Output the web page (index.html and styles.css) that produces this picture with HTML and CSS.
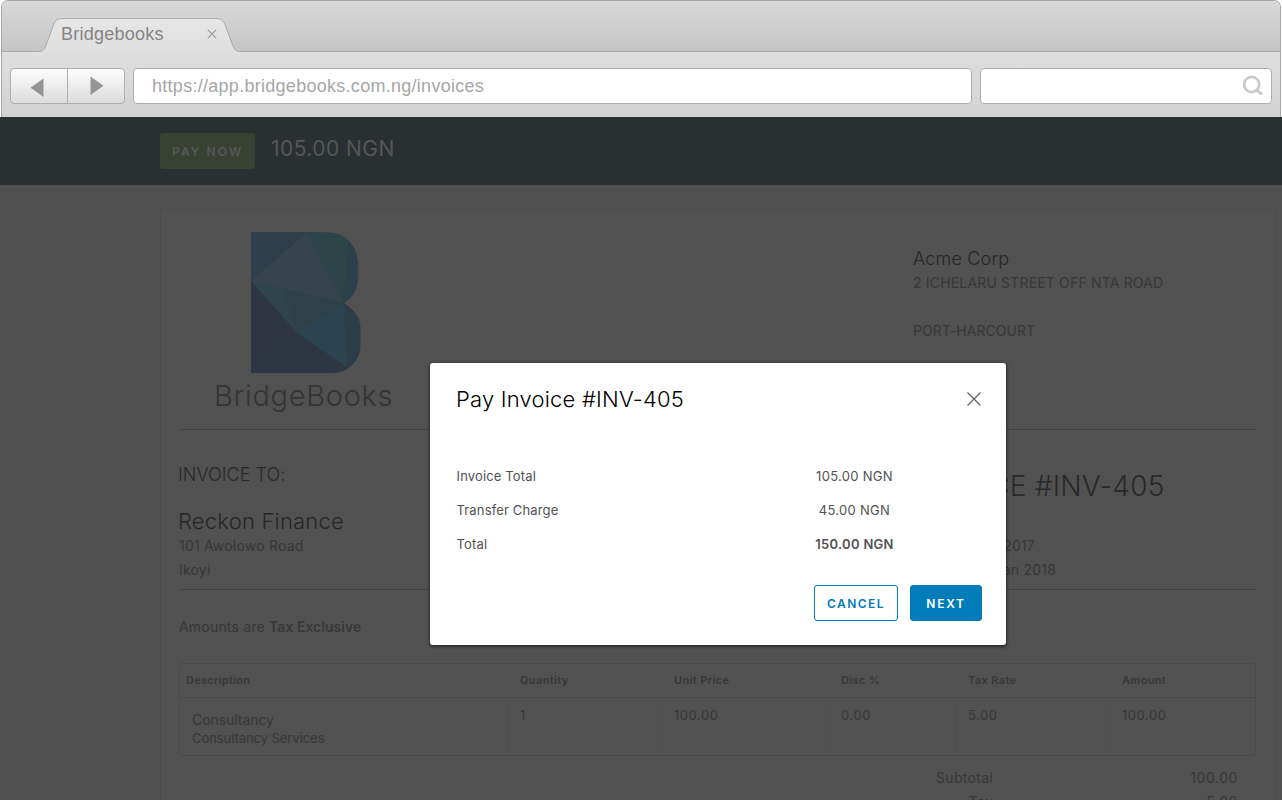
FILE: index.html
```html
<!DOCTYPE html>
<html lang="en">
<head>
<meta charset="utf-8">
<title>Bridgebooks</title>
<link rel="stylesheet" href="styles.css">
</head>
<body>
<div class="window">
  <header class="chrome">
    <div class="tabstrip">
      <svg class="tab-shape" width="204" height="36" viewBox="0 0 204 36">
        <defs><linearGradient id="tabfill" x1="0" y1="0" x2="0" y2="1"><stop offset="0" stop-color="#e6e6e6"/><stop offset="1" stop-color="#dfdfdf"/></linearGradient></defs>
        <path d="M0 36V34.500C5 34.500 6.500 32.500 8 28.500L15.500 8C17.500 3 19.500 1.500 24.500 1.500H178C183 1.500 185.500 3.500 187 7.500L194.500 28C196.500 33 198 34.500 203 34.500V36Z" fill="url(#tabfill)"/>
        <path d="M-1 34.500H0C5 34.500 6.500 32.500 8 28.500L15.500 8C17.500 3 19.500 1.500 24.500 1.500H178C183 1.500 185.500 3.500 187 7.500L194.500 28C196.500 33 198 34.500 203 34.500H205" fill="none" stroke="#ababab"/>
      </svg>
      <div class="tab">
        <span class="tab-title">Bridgebooks</span>
        <svg width="10" height="10" viewBox="0 0 10 10"><path d="M.8.8l8.400 8.400M9.200.8L.8 9.200" stroke="#9a9a9a" stroke-width="1.200"/></svg>
      </div>
    </div>
    <div class="toolbar">
      <div class="nav">
        <span class="nav-btn"><svg width="14" height="20" viewBox="0 0 14 20"><path d="M13.500 .5v18.500L.5 9.800z" fill="#959595"/></svg></span>
        <span class="nav-btn nav-next"><svg width="14" height="20" viewBox="0 0 14 20"><path d="M.5 .5v18.500l13-9.300z" fill="#959595"/></svg></span>
      </div>
      <div class="field url">https://app.bridgebooks.com.ng/invoices</div>
      <div class="field search"><svg width="22" height="22" viewBox="0 0 22 22"><circle cx="9.700" cy="9.500" r="7.600" fill="none" stroke="#cbcbcb" stroke-width="2.800"/><path d="M14.500 15l4.500 3.500" stroke="#cbcbcb" stroke-width="3" stroke-linecap="round"/></svg></div>
    </div>
  </header>

  <div class="paybar">
    <span class="pay-now">PAY NOW</span>
    <span class="pay-amount">105.00 NGN</span>
  </div>

  <main class="page">
    <article class="invoice">
      <section class="letterhead">
        <div class="brand">
          <svg class="brand-mark" width="110" height="141" viewBox="275 96 327 422" preserveAspectRatio="none">
            <defs><clipPath id="b"><path d="M275 96H440L505 98C555 98 592 138 592 190V235C592 270 575 292 552 309C582 329 601 352 601 385V430C601 482 565 518 515 518H275Z"/></clipPath></defs>
            <g clip-path="url(#b)">
              <path d="M275 96h330v422H275z" fill="#2b3d49"/>
              <path d="M275 96H440L275 244z" fill="#2c3f4a"/>
              <path d="M440 96L550 307 275 244z" fill="#36444d"/>
              <path d="M440 96H568L550 307z" fill="#2d4547"/>
              <path d="M568 96H605V330L550 307z" fill="#2c404a"/>
              <path d="M275 244L375 267 410 397z" fill="#30454b"/>
              <path d="M375 267L550 307 410 397z" fill="#2e4149"/>
              <path d="M550 307L559 500 410 397z" fill="#2c4451"/>
              <path d="M275 244L410 397 275 518z" fill="#303542"/>
              <path d="M410 397L585 518H275z" fill="#2c3743"/>
            </g>
          </svg>
          <span class="brand-name">BridgeBooks</span>
        </div>
        <div class="address">
          <span class="company">Acme Corp</span>
          <span class="street">2 ICHELARU STREET OFF NTA ROAD</span>
          <span class="city">PORT-HARCOURT</span>
        </div>
      </section>

      <section class="parties">
        <div class="billed">
          <span class="to-label">INVOICE TO:</span>
          <span class="client">Reckon Finance</span>
          <span>101 Awolowo Road</span>
          <span>Ikoyi</span>
        </div>
        <div class="meta">
          <span class="number">INVOICE #INV-405</span>
          <span class="issued">Dec 2017</span>
          <span class="due">Jan 2018</span>
        </div>
      </section>

      <p class="tax-note">Amounts are <b>Tax Exclusive</b></p>

      <div class="items">
        <div class="row head">
          <span>Description</span><span>Quantity</span><span>Unit Price</span><span>Disc %</span><span>Tax Rate</span><span>Amount</span>
        </div>
        <div class="row body">
          <div class="desc"><span class="desc-name">Consultancy</span><span class="desc-text">Consultancy Services</span></div>
          <span>1</span><span>100.00</span><span>0.00</span><span>5.00</span><span>100.00</span>
        </div>
      </div>

      <div class="totals">
        <span>Subtotal</span><span class="sum">100.00</span>
        <span>Tax</span><span class="sum">5.00</span>
      </div>
    </article>
  </main>

  <div class="modal">
    <div class="modal-head">
      <h3>Pay Invoice #INV-405</h3>
      <svg width="16" height="16" viewBox="0 0 16 16"><path d="M1.500 1.500l13 13M14.500 1.500l-13 13" stroke="#5f5f5f" stroke-width="1.200"/></svg>
    </div>
    <div class="charges">
      <span>Invoice Total</span><span class="value">105.00 NGN</span>
      <span>Transfer Charge</span><span class="value">45.00 NGN</span>
      <span>Total</span><b class="value">150.00 NGN</b>
    </div>
    <div class="actions">
      <span class="btn cancel">CANCEL</span>
      <span class="btn next">NEXT</span>
    </div>
  </div>
</div>
</body>
</html>
```
FILE: styles.css
```css
* { box-sizing: border-box; }
body { margin: 0; background: #fff; font-family: Inter, "Open Sans", sans-serif; }
svg { display: block; }

.window { position: relative; width: 1282px; height: 800px; overflow: hidden; display: flex; flex-direction: column; }

/* browser frame */
.chrome { height: 117px; flex: none; margin: 0 1px; border: 1px solid #a6a6a6; border-bottom: 0; border-radius: 7px 7px 0 0; overflow: hidden; font-family: "Liberation Sans", Arial, sans-serif; }
.tabstrip { position: relative; height: 51px; border-bottom: 1px solid #ababab; background: linear-gradient(#d9d9d9, #c5c5c5); }
.tab-shape { position: absolute; left: 36px; top: 16px; }
.tab { position: relative; display: flex; align-items: center; justify-content: space-between; width: 157px; height: 34px; margin-left: 58px; top: 16px; }
.tab-title { padding-left: 1px; font-size: 18px; letter-spacing: .25px; color: #858585; }
.toolbar { display: flex; gap: 8px; height: 65px; padding: 16px 8px 13px; background: linear-gradient(#dfdfdf, #d2d2d2); }
.nav { display: flex; width: 115px; border: 1px solid #aeaeae; border-radius: 4px; background: linear-gradient(#fdfdfd, #dcdcdc); }
.nav-btn { flex: none; width: 56px; display: flex; align-items: center; padding: 3px 0 0 19px; }
.nav-next { width: 57px; border-left: 1px solid #aeaeae; padding: 0 0 0 22px; }
.field { height: 36px; border: 1px solid #aeaeae; border-radius: 4px; background: #fff; }
.url { width: 839px; padding-left: 18px; line-height: 34px; font-size: 18px; letter-spacing: .28px; color: #a6a6a6; }
.search { width: 292px; display: flex; align-items: center; justify-content: flex-end; padding-right: 7px; }

/* payment bar */
.paybar { flex: none; height: 68px; padding: 16px 0 0 160px; display: flex; gap: 16px; background: #2a2f32; color: #565656; }
.pay-now { width: 95px; height: 36px; line-height: 38px; padding-left: 12px; border-radius: 3px; background: #394130; font-size: 12px; font-weight: 600; letter-spacing: 2.1px; }
.pay-amount { font-size: 21px; line-height: 31px; letter-spacing: .45px; }

/* invoice */
.page { flex: 1; padding: 24px 6px 0 160px; background: #505050; color: #383838; }
.invoice { height: 620px; border: 1px solid #4a4a4a; border-radius: 3px; padding: 0 19px 0 18px; background: #515151; font-size: 14px; line-height: 24px; letter-spacing: .2px; }
.letterhead { display: grid; grid-template-columns: 734px 1fr; height: 220px; border-bottom: 1px solid #424242; }
.brand { padding: 22px 0 0 35px; }
.brand-mark { margin-left: 37px; }
.brand-name { display: block; margin-top: 4px; line-height: 38px; font-size: 29px; font-weight: 300; letter-spacing: .7px; color: #353535; }
.address, .billed, .meta { display: flex; flex-direction: column; }
.address { padding-top: 37px; }
.company { font-size: 18px; font-weight: 300; color: #262626; }
.street { letter-spacing: .17px; margin-bottom: 24px; }
.city { letter-spacing: .05px; }
.parties { display: grid; grid-template-columns: 734px 1fr; height: 160px; padding-top: 32px; border-bottom: 1px solid #424242; }
.to-label { font-size: 18px; font-weight: 300; letter-spacing: .05px; color: #292929; margin: 1px 0 22px -1px; }
.client { margin: 0 0 1px -1px; font-size: 22px; font-weight: 300; color: #262626; }
.number { font-size: 28px; font-weight: 300; line-height: 24px; margin: 12px 0 36px; letter-spacing: .22px; color: #292929; }
.issued { width: 122px; text-align: right; }
.due { width: 143px; text-align: right; }
.tax-note { margin: 25px 0 24px; }
.tax-note b { font-weight: 600; letter-spacing: .03px; }

.items { height: 93px; border: 1px solid #494949; border-radius: 3px; }
.row { display: grid; grid-template-columns: 328px 154px 167px 127px 154px 1fr; }
.head { height: 34px; border-bottom: 1px solid #494949; line-height: 32px; font-size: 11px; font-weight: 600; letter-spacing: .36px; }
.head span { padding-left: 12px; }
.head span:first-child { padding-left: 6px; letter-spacing: .27px; }
.body { height: 57px; font-size: 13px; line-height: 34px; letter-spacing: .55px; }
.body > span { padding-left: 11px; border-left: 1px solid #4e4e4e; }
.desc { display: flex; flex-direction: column; padding: 13px 0 0 12px; line-height: 18px; letter-spacing: -.06px; }
.desc-name { font-size: 14px; }

.totals { display: grid; grid-template-columns: 814px 245px; padding-top: 10px; letter-spacing: .3px; text-align: right; }
.sum { letter-spacing: .55px; }

/* payment dialog */
.modal { position: absolute; left: 430px; top: 363px; width: 576px; height: 282px; padding: 24px; border-radius: 3px; background: #fff; box-shadow: 0 1px 3px 1px rgba(0, 0, 0, .45); color: #525252; }
.modal-head { display: flex; justify-content: space-between; align-items: center; height: 24px; }
.modal-head h3 { margin: -1px 0 0 2px; font-size: 22px; line-height: 24px; font-weight: 300; letter-spacing: .2px; color: #000; }
.charges { display: grid; grid-template-columns: 329px 1fr; margin-top: 48px; padding: 0 58px 0 2px; font-size: 13px; line-height: 34px; letter-spacing: .15px; }
.charges > span:not(.value) { padding-left: .5px; }
.value { text-align: center; letter-spacing: .3px; }
.charges b { font-weight: 600; }
.actions { display: flex; justify-content: flex-end; gap: 12px; margin-top: 24px; }
.btn { height: 36px; border: 1px solid #007cbb; border-radius: 3px; font-size: 12px; line-height: 35px; font-weight: 600; text-align: center; }
.cancel { width: 84px; letter-spacing: 1.45px; color: #007cbb; }
.next { width: 72px; letter-spacing: 1.7px; background: #007cbb; color: #fff; }
```
